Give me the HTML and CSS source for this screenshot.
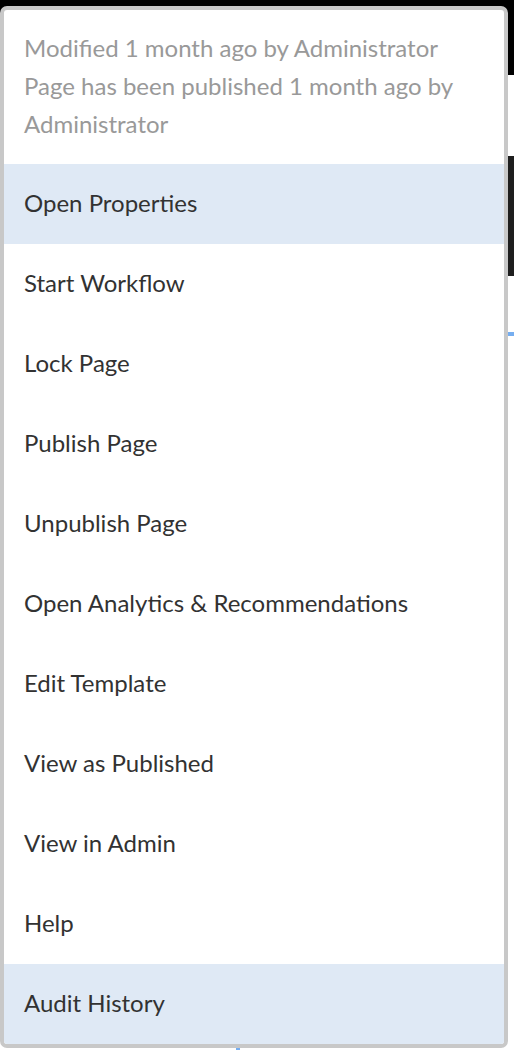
FILE: index.html
```html
<!DOCTYPE html>
<html>
<head>
<meta charset="utf-8">
<link rel="stylesheet" href="styles.css">
</head>
<body>
<div class="page">
  <div class="topbar"></div>
  <div class="side-dark side-mid"></div>
  <div class="side-blue"></div>
  <div class="bottom-mark"></div>
  <div class="popover">
    <div class="info">
      <p>Modified 1 month ago by Administrator</p>
      <p>Page has been published 1 month ago by Administrator</p>
    </div>
    <ul class="menu">
      <li class="item active">Open Properties</li>
      <li class="item">Start Workflow</li>
      <li class="item">Lock Page</li>
      <li class="item">Publish Page</li>
      <li class="item">Unpublish Page</li>
      <li class="item">Open Analytics &amp; Recommendations</li>
      <li class="item">Edit Template</li>
      <li class="item">View as Published</li>
      <li class="item">View in Admin</li>
      <li class="item">Help</li>
      <li class="item active">Audit History</li>
    </ul>
  </div>
</div>
</body>
</html>
```
FILE: styles.css
```css
html, body {
  margin: 0;
  padding: 0;
  background: #ffffff;
}
.page {
  position: relative;
  width: 514px;
  height: 1050px;
  overflow: hidden;
  font-family: Lato, "Open Sans", sans-serif;
}
.topbar {
  position: absolute;
  left: 0;
  top: 0;
  width: 514px;
  height: 75px;
  background: #000000;
}
.side-dark {
  position: absolute;
  right: 0;
  width: 20px;
  background: #1e1e1e;
}
.side-mid {
  top: 156px;
  height: 120px;
}
.side-blue {
  position: absolute;
  right: 0;
  top: 332px;
  width: 20px;
  height: 4px;
  background: #76aef0;
}
.bottom-mark {
  position: absolute;
  left: 236px;
  top: 1040px;
  width: 4px;
  height: 10px;
  background: #76aef0;
}
.popover {
  position: absolute;
  left: 0;
  top: 6px;
  width: 500px;
  border: 4px solid #c8c8c8;
  border-radius: 7px;
  background: #ffffff;
  overflow: hidden;
}
.info {
  padding: 19px 20px 21px 20px;
  color: #999999;
  font-size: 24px;
  line-height: 38px;
}
.info p {
  margin: 0;
}
.menu {
  list-style: none;
  margin: 0;
  padding: 0;
}
.item {
  box-sizing: border-box;
  height: 80px;
  display: flex;
  align-items: center;
  padding: 0 20px 3px 20px;
  color: #323232;
  font-size: 24px;
}
.item.active {
  background: #dfe9f5;
}
```
